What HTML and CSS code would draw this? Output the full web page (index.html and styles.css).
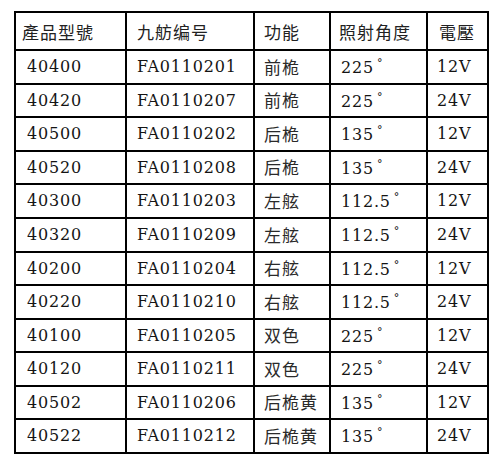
FILE: index.html
```html
<!DOCTYPE html>
<html lang="zh">
<head>
<meta charset="utf-8">
<title>產品型號</title>
<link rel="stylesheet" href="styles.css">
</head>
<body>
<table class="spec">
  <thead>
    <tr>
      <th class="c1">產品型號</th>
      <th class="c2">九舫编号</th>
      <th class="c3">功能</th>
      <th class="c4">照射角度</th>
      <th class="c5">電壓</th>
    </tr>
  </thead>
  <tbody>
    <tr><td>40400</td><td>FA0110201</td><td class="zh">前桅</td><td>225<span class="deg">°</span></td><td>12V</td></tr>
    <tr class="s"><td>40420</td><td>FA0110207</td><td class="zh">前桅</td><td>225<span class="deg">°</span></td><td>24V</td></tr>
    <tr><td>40500</td><td>FA0110202</td><td class="zh">后桅</td><td>135<span class="deg">°</span></td><td>12V</td></tr>
    <tr class="s"><td>40520</td><td>FA0110208</td><td class="zh">后桅</td><td>135<span class="deg">°</span></td><td>24V</td></tr>
    <tr><td>40300</td><td>FA0110203</td><td class="zh">左舷</td><td>112.5<span class="deg">°</span></td><td>12V</td></tr>
    <tr><td>40320</td><td>FA0110209</td><td class="zh">左舷</td><td>112.5<span class="deg">°</span></td><td>24V</td></tr>
    <tr class="s"><td>40200</td><td>FA0110204</td><td class="zh">右舷</td><td>112.5<span class="deg">°</span></td><td>12V</td></tr>
    <tr><td>40220</td><td>FA0110210</td><td class="zh">右舷</td><td>112.5<span class="deg">°</span></td><td>24V</td></tr>
    <tr class="s"><td>40100</td><td>FA0110205</td><td class="zh">双色</td><td>225<span class="deg">°</span></td><td>12V</td></tr>
    <tr><td>40120</td><td>FA0110211</td><td class="zh">双色</td><td>225<span class="deg">°</span></td><td>24V</td></tr>
    <tr class="s"><td>40502</td><td>FA0110206</td><td class="zh">后桅黄</td><td>135<span class="deg">°</span></td><td>12V</td></tr>
    <tr><td>40522</td><td>FA0110212</td><td class="zh">后桅黄</td><td>135<span class="deg">°</span></td><td>24V</td></tr>
  </tbody>
</table>
</body>
</html>
```

FILE: styles.css
```css
html, body {
  margin: 0;
  background: #ffffff;
}

body {
  padding: 11px 0 0 14px;
  color: #141414;
}

.spec {
  border-collapse: separate;
  border-spacing: 0;
  table-layout: fixed;
  width: 475px;
  border-top: 2px solid #000;
  border-left: 2px solid #000;
}

.spec th,
.spec td {
  box-sizing: border-box;
  border-right: 2px solid #000;
  border-bottom: 2px solid #000;
  padding: 0 0 0 10px;
  text-align: left;
  vertical-align: middle;
  font-weight: normal;
  white-space: nowrap;
  overflow: hidden;
}

.spec th {
  height: 38px;
  font-family: "Noto Sans CJK TC", "Noto Sans CJK SC", sans-serif;
  font-size: 17px;
  letter-spacing: 1px;
  line-height: 1;
  color: #222;
}

.spec td {
  height: 34px;
  font-family: "DejaVu Serif", "Liberation Serif", serif;
  font-size: 16px;
  letter-spacing: 0.8px;
  line-height: 1;
}

.spec tr.s td {
  height: 33px;
}

.spec td.zh {
  font-family: "Noto Sans CJK SC", "Noto Sans CJK TC", sans-serif;
  font-size: 17px;
  letter-spacing: 1px;
  padding-bottom: 2px;
  color: #2a2a2a;
}

.c1 { width: 111px; }
.c2 { width: 128px; }
.c3 { width: 76px; }
.c4 { width: 97px; }
.c5 { width: 61px; }

.spec th.c1 { padding-left: 6px; }
.spec th.c3 { padding-left: 9px; }
.spec th.c4 { padding-left: 8px; }
.spec th.c5 { padding-left: 11px; }

.spec td:nth-child(1) { padding-left: 11px; }
.spec td:nth-child(3) { padding-left: 9px; }
.spec td:nth-child(5) { padding-left: 9px; }

.deg {
  display: inline-block;
  margin-left: 3px;
  font-size: 11px;
  vertical-align: 6px;
  letter-spacing: 0;
}
```
